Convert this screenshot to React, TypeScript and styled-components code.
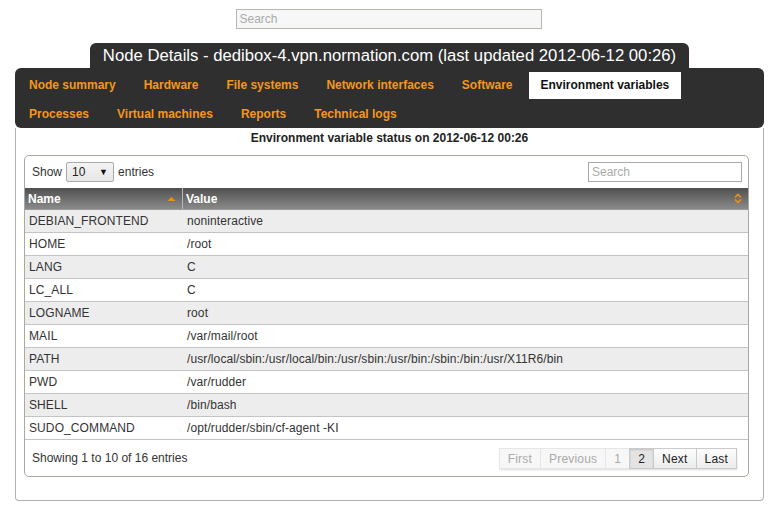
import React from "react";
import styled, { createGlobalStyle } from "styled-components";

const Global = createGlobalStyle`
  html, body { margin: 0; padding: 0; background: #fff; }
  body { font-family: "Liberation Sans", Arial, sans-serif; color: #333; }
  * { box-sizing: border-box; }
`;

const Page = styled.div`
  width: 781px;
  padding: 9px 17px 0 15px;
  display: flex;
  flex-direction: column;
`;

const TopSearchRow = styled.div`
  display: flex;
  justify-content: center;
`;

const TopSearch = styled.div`
  width: 306px;
  height: 20px;
  margin-right: 2px;
  border: 1px solid #b8b8b0;
  background: #f7f7f7;
  color: #aaa;
  font-size: 12px;
  line-height: 18px;
  padding-left: 3px;
`;

const TitleRow = styled.div`
  display: flex;
  justify-content: center;
  margin-top: 14px;
`;

const TitleTab = styled.div`
  width: 599px;
  height: 25px;
  background: #2f2f2f;
  color: #fff;
  border-radius: 6px 6px 0 0;
  font-size: 16.7px;
  line-height: 26px;
  text-align: center;
  white-space: nowrap;
`;

const TabBar = styled.div`
  background: #2f2f2f;
  border-radius: 6px;
  padding: 4px 2px 0 2px;
  display: flex;
  flex-wrap: wrap;
  row-gap: 1px;
`;

const Tab = styled.div<{ $active?: boolean }>`
  height: 27px;
  padding: 0 12px;
  margin-right: 4px;
  font-size: 12px;
  font-weight: bold;
  line-height: 26px;
  white-space: nowrap;
  color: ${(p) => (p.$active ? "#111" : "#f5971d")};
  background: ${(p) => (p.$active ? "#fff" : "transparent")};
`;

const RowBreak = styled.div`
  flex-basis: 100%;
  height: 0;
`;

const ContentBox = styled.div`
  border: 1px solid #b0b0aa;
  border-top: none;
  border-radius: 0 0 4px 4px;
  height: 373px;
  padding: 0 14px 0 8px;
  display: flex;
  flex-direction: column;
`;

const Heading = styled.div`
  font-size: 12px;
  font-weight: bold;
  color: #222;
  text-align: center;
  height: 27px;
  line-height: 20px;
  padding-left: 6px;
`;

const InnerBox = styled.div`
  border: 1px solid #aaa9a0;
  border-radius: 5px;
  height: 322px;
  display: flex;
  flex-direction: column;
`;

const Controls = styled.div`
  display: flex;
  align-items: center;
  justify-content: space-between;
  height: 32px;
  padding: 0 6px 0 7px;
`;

const Show = styled.div`
  display: flex;
  align-items: center;
  gap: 4px;
  font-size: 12px;
  color: #333;
`;

const Select = styled.div`
  width: 48px;
  height: 20px;
  border: 1px solid #aaa;
  border-radius: 2px;
  background: linear-gradient(#f4f4f4, #e6e6e6);
  display: flex;
  align-items: center;
  justify-content: space-between;
  padding: 0 5px;
  font-size: 12px;
  color: #222;
`;

const Arrow = styled.span`
  font-size: 9px;
  color: #111;
`;

const FilterInput = styled.div`
  width: 154px;
  height: 20px;
  border: 1px solid #aaa;
  color: #aaa;
  font-size: 12px;
  line-height: 18px;
  padding-left: 3px;
  background: #fff;
`;

const Table = styled.div`
  display: flex;
  flex-direction: column;
`;

const HeadRow = styled.div`
  display: grid;
  grid-template-columns: 158px 1fr;
  height: 22px;
  background: linear-gradient(#505050, #8a8a8a);
  border-bottom: 1px solid #9a9a9a;
`;

const HeadCell = styled.div<{ $sep?: boolean }>`
  display: flex;
  align-items: center;
  justify-content: space-between;
  padding: 0 6px 0 3px;
  font-size: 12px;
  font-weight: bold;
  color: #fff;
  border-right: ${(p) => (p.$sep ? "1px solid #b8b8b8" : "none")};
`;

const BodyRow = styled.div<{ $odd: boolean }>`
  display: grid;
  grid-template-columns: 158px 1fr;
  height: 23px;
  background: ${(p) => (p.$odd ? "#ededed" : "#fff")};
  border-bottom: 1px solid #c4c4c4;
  font-size: 12px;
  color: #333;
  letter-spacing: 0.1px;
`;

const Cell = styled.div`
  line-height: 22px;
  padding-left: 4px;
  white-space: nowrap;
`;

const Footer = styled.div`
  display: flex;
  justify-content: space-between;
  align-items: center;
  height: 36px;
  padding: 0 11px 0 7px;
  font-size: 12px;
  color: #333;
`;

const Pager = styled.div`
  display: flex;
  box-shadow: 0 1px 2px rgba(0, 0, 0, 0.15);
`;

const PageBtn = styled.div<{ $state: "disabled" | "current" | "normal" }>`
  height: 21px;
  padding: 0 8px;
  font-size: 12px;
  letter-spacing: 0.2px;
  line-height: 20px;
  border: 1px solid ${(p) => (p.$state === "disabled" ? "#e6e6e6" : "#cacaca")};
  margin-left: -1px;
  color: ${(p) => (p.$state === "disabled" ? "#aaa" : "#222")};
  background: ${(p) =>
    p.$state === "disabled"
      ? "#f7f7f7"
      : p.$state === "current"
      ? "#e4e4e4"
      : "linear-gradient(#fdfdfd, #ececec)"};
  box-shadow: ${(p) => (p.$state === "current" ? "inset 0 1px 2px rgba(0,0,0,0.15)" : "none")};
`;

const rows: [string, string][] = [
  ["DEBIAN_FRONTEND", "noninteractive"],
  ["HOME", "/root"],
  ["LANG", "C"],
  ["LC_ALL", "C"],
  ["LOGNAME", "root"],
  ["MAIL", "/var/mail/root"],
  ["PATH", "/usr/local/sbin:/usr/local/bin:/usr/sbin:/usr/bin:/sbin:/bin:/usr/X11R6/bin"],
  ["PWD", "/var/rudder"],
  ["SHELL", "/bin/bash"],
  ["SUDO_COMMAND", "/opt/rudder/sbin/cf-agent -KI"],
];

const SortUp = () => (
  <svg width="9" height="6" viewBox="0 0 9 6">
    <polygon points="0.5,5 4.5,1 8.5,5" fill="#f0900f" />
  </svg>
);

const SortBoth = () => (
  <svg width="8" height="11" viewBox="0 0 8 11">
    <polyline points="1,4.5 4,1.5 7,4.5" fill="none" stroke="#f0900f" strokeWidth="1.6" />
    <polyline points="1,6.5 4,9.5 7,6.5" fill="none" stroke="#f0900f" strokeWidth="1.6" />
  </svg>
);

export default function App() {
  return (
    <>
      <Global />
      <Page>
        <TopSearchRow>
          <TopSearch>Search</TopSearch>
        </TopSearchRow>
        <TitleRow>
          <TitleTab>Node Details - dedibox-4.vpn.normation.com (last updated 2012-06-12 00:26)</TitleTab>
        </TitleRow>
        <TabBar>
          <Tab>Node summary</Tab>
          <Tab>Hardware</Tab>
          <Tab>File systems</Tab>
          <Tab>Network interfaces</Tab>
          <Tab>Software</Tab>
          <Tab $active>Environment variables</Tab>
          <RowBreak />
          <Tab>Processes</Tab>
          <Tab>Virtual machines</Tab>
          <Tab>Reports</Tab>
          <Tab>Technical logs</Tab>
        </TabBar>
        <ContentBox>
          <Heading>Environment variable status on 2012-06-12 00:26</Heading>
          <InnerBox>
            <Controls>
              <Show>
                Show
                <Select>
                  <span>10</span>
                  <Arrow>▼</Arrow>
                </Select>
                entries
              </Show>
              <FilterInput>Search</FilterInput>
            </Controls>
            <Table>
              <HeadRow>
                <HeadCell $sep>
                  Name
                  <SortUp />
                </HeadCell>
                <HeadCell>
                  Value
                  <SortBoth />
                </HeadCell>
              </HeadRow>
              {rows.map(([n, v], i) => (
                <BodyRow key={n} $odd={i % 2 === 0}>
                  <Cell>{n}</Cell>
                  <Cell>{v}</Cell>
                </BodyRow>
              ))}
            </Table>
            <Footer>
              <span>Showing 1 to 10 of 16 entries</span>
              <Pager>
                <PageBtn $state="disabled">First</PageBtn>
                <PageBtn $state="disabled">Previous</PageBtn>
                <PageBtn $state="disabled">1</PageBtn>
                <PageBtn $state="current">2</PageBtn>
                <PageBtn $state="normal">Next</PageBtn>
                <PageBtn $state="normal">Last</PageBtn>
              </Pager>
            </Footer>
          </InnerBox>
        </ContentBox>
      </Page>
    </>
  );
}
